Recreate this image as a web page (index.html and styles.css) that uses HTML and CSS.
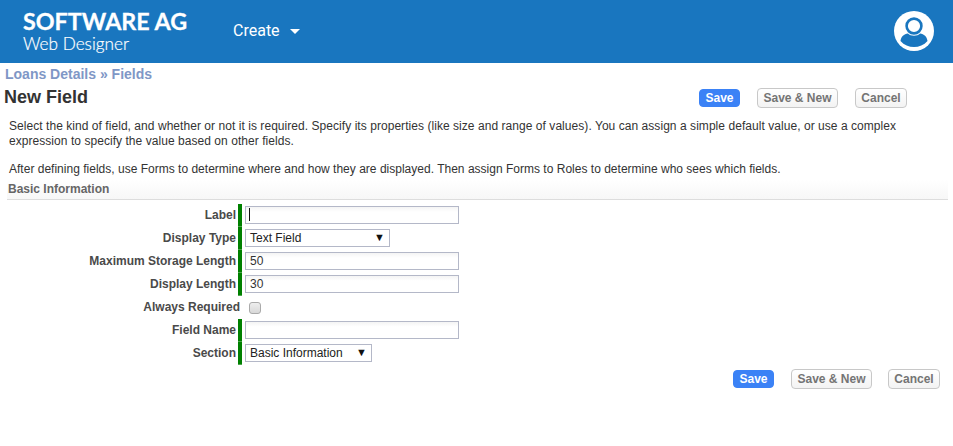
FILE: index.html
```html
<!DOCTYPE html>
<html lang="en">
<head>
<meta charset="utf-8">
<title>New Field</title>
<link rel="stylesheet" href="styles.css">
</head>
<body>
<header class="topbar">
  <div class="logo">
    <div class="logo-main">SOFTWARE AG</div>
    <div class="logo-sub">Web Designer</div>
  </div>
  <nav class="menu"><span>Create</span><span class="caret"></span></nav>
  <svg class="avatar" width="42" height="42" viewBox="0 0 42 42">
    <circle cx="21" cy="21" r="20" fill="#fff"/>
    <circle cx="21" cy="16" r="7.4" fill="none" stroke="#1976bf" stroke-width="2.6"/>
    <path d="M7.5 31 C8 26.5 11 24 15 23.5 C17.5 26.5 24.5 26.5 27 23.5 C31 24 34 26.5 34.5 31 C31 35 26 37 21 37 C16 37 11 35 7.5 31 Z" fill="#1976bf"/>
  </svg>
</header>
<main class="page">
  <div class="crumb">Loans Details » Fields</div>
  <div class="title-row">
    <h1>New Field</h1>
    <div class="actions actions-top">
      <button class="btn primary">Save</button>
      <button class="btn btn-new">Save &amp; New</button>
      <button class="btn btn-cancel">Cancel</button>
    </div>
  </div>
  <div class="intro">
    <p class="intro-first">Select the kind of field, and whether or not it is required. Specify its properties (like size and range of values). You can assign a simple default value, or use a complex expression to specify the value based on other fields.</p>
    <p class="intro-second">After defining fields, use Forms to determine where and how they are displayed. Then assign Forms to Roles to determine who sees which fields.</p>
  </div>
  <h2 class="section">Basic Information</h2>
  <form class="form">
    <label class="lab">Label</label>
    <div class="val req"><span class="input"><span class="cursor"></span></span></div>
    <label class="lab">Display Type</label>
    <div class="val req"><span class="select sel-type">Text Field<span class="arrow">▼</span></span></div>
    <label class="lab">Maximum Storage Length</label>
    <div class="val req"><span class="input">50</span></div>
    <label class="lab">Display Length</label>
    <div class="val req"><span class="input">30</span></div>
    <label class="lab lab-wide">Always Required</label>
    <div class="val"><span class="check"></span></div>
    <label class="lab">Field Name</label>
    <div class="val req"><span class="input"></span></div>
    <label class="lab">Section</label>
    <div class="val req"><span class="select sel-section">Basic Information<span class="arrow">▼</span></span></div>
  </form>
  <div class="actions actions-bottom">
    <button class="btn primary">Save</button>
    <button class="btn btn-new">Save &amp; New</button>
    <button class="btn btn-cancel">Cancel</button>
  </div>
</main>
</body>
</html>
```

FILE: styles.css
```css
* { box-sizing: border-box; }
html, body { margin: 0; padding: 0; background: #fff; }
body { font-family: "Liberation Sans", Arial, sans-serif; font-size: 12px; color: #333; height: 446px; overflow: hidden; }
.topbar { height: 63px; background: #1976bf; color: #fff; display: flex; align-items: center; padding: 0 18px 0 23px; }
.logo { width: 210px; padding-bottom: 1px; }
.logo-main { font-family: Lato, sans-serif; font-weight: 700; font-size: 23.3px; line-height: 26px; -webkit-text-stroke: .3px #fff; }
.logo-sub { font-family: Lato, sans-serif; font-weight: 300; font-size: 17.2px; line-height: 20px; -webkit-text-stroke: .2px #fff; }
.menu { font-family: Roboto, sans-serif; font-size: 16px; display: flex; align-items: center; gap: 10px; margin-bottom: 3px; }
.caret { width: 0; height: 0; border-left: 5px solid transparent; border-right: 5px solid transparent; border-top: 5px solid #fff; margin-top: 2px; }
.avatar { margin-left: auto; margin-top: -1px; }
.page { padding: 0 5px; }
.crumb { color: #7f97c6; font-weight: 700; font-size: 14px; line-height: 16px; margin-top: 3px; }
.title-row { display: flex; align-items: center; height: 26px; margin-top: 3px; margin-left: -1px; }
h1 { margin: 0 0 3px; font-size: 18px; line-height: 22px; font-weight: 700; color: #333; }
.actions { display: flex; align-items: center; gap: 17px; }
.actions-top { margin-left: auto; margin-right: 41px; }
.actions-bottom { justify-content: flex-end; gap: 16px; margin-top: 4px; margin-right: 8px; }
.actions-bottom .primary { margin-right: 1px; }
.btn { font-family: "Liberation Sans", Arial, sans-serif; font-size: 12px; font-weight: 700; color: #747474; height: 20px; width: 52px; padding: 0; text-align: center; border: 1px solid #c8c8c8; border-radius: 4px; background: linear-gradient(#fff, #f3f3f3); }
.btn.primary { width: 41px; background: #3b82f6; border-color: #3b82f6; color: #fff; height: 18px; }
.btn-new { width: 81px; }
.intro { padding: 8px 0 0 4px; font-size: 12px; line-height: 15px; color: #333; width: 930px; }
.intro p { margin: 0 0 13px; }
.intro-first { letter-spacing: .05px; }
.intro-second { letter-spacing: .01px; }
.section { margin: -10px 0 0 2px; width: 941px; height: 20px; font-size: 12px; line-height: 16px; font-weight: 700; color: #666; border-bottom: 1px solid #ddd; background: linear-gradient(#fff, #f7f7f7); padding: 1px 0 0 1px; }
.form { display: grid; grid-template-columns: 233px 1fr; grid-auto-rows: 23px; margin-top: 4px; }
.lab { text-align: right; font-weight: 700; font-size: 12px; line-height: 23px; color: #4a4a4a; padding-right: 2px; }
.lab-wide { padding-right: 0; margin-right: -2px; }
.val { display: flex; align-items: center; padding: 0 0 1px 7px; }
.val.req { background: linear-gradient(#008000 22px, #4da64d 22px) left top / 4px 100% no-repeat; }
.input { display: block; width: 214px; height: 18px; border: 1px solid #b4b8c8; padding: 0 4px; font-size: 12px; line-height: 16px; background: linear-gradient(#f4f4f4, #fff 30%); color: #333; }
.cursor { display: block; width: 1px; height: 13px; background: #111; margin: 1px 0 0 -1px; }
.select { display: flex; justify-content: space-between; align-items: center; height: 18px; border: 1px solid #b4b8c8; padding: 0 4px; font-size: 12px; line-height: 16px; color: #222; background: #fff; }
.sel-type { width: 145px; }
.sel-section { width: 127px; }
.arrow { font-size: 11px; line-height: 14px; margin-top: -2px; color: #111; }
.check { display: block; width: 12px; height: 12px; margin: 1px 0 0 4px; border: 1px solid #aaa; border-radius: 3px; background: linear-gradient(#eee, #d8d8d8); }
```
